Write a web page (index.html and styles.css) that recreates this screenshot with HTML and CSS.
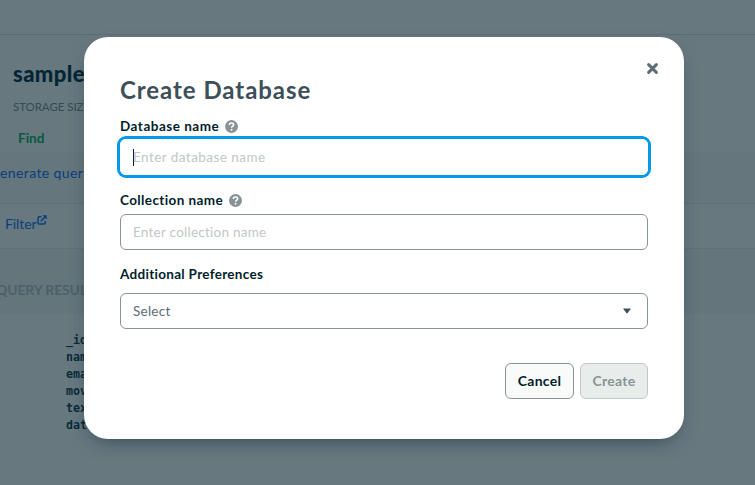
FILE: index.html
```html
<!DOCTYPE html>
<html lang="en">
<head>
<meta charset="utf-8">
<title>Create Database</title>
<link rel="stylesheet" href="styles.css">
</head>
<body>
<main class="page">
  <div class="topbar"></div>
  <section class="heading">
    <h1>sample</h1>
    <p class="storage">STORAGE SIZE</p>
    <p class="find">Find</p>
  </section>
  <section class="generate"><a>enerate query</a></section>
  <section class="filter"><a>Filter</a><svg class="external" viewBox="0 0 10 10"><path d="M4.3 1.7H2.2Q1 1.7 1 2.9V7.8Q1 9 2.2 9H7Q8.2 9 8.2 7.8V6M3.8 6.2 8 2" fill="none" stroke="currentColor" stroke-width="1.5"/><path d="M5.4.3H9.7V4.6Z" fill="currentColor"/></svg></section>
  <section class="results">QUERY RESULTS</section>
  <pre class="document">_id
name
email
movie
text
date</pre>
</main>
<div class="overlay">
  <div class="modal" role="dialog">
    <button class="close" aria-label="Close"><svg viewBox="0 0 10 10"><path d="M1.5 1.5 8.5 8.5M8.5 1.5 1.5 8.5" fill="none" stroke="currentColor" stroke-width="2.7" stroke-linecap="round"/></svg></button>
    <h2>Create Database</h2>
    <div class="label first"><span>Database name</span><svg class="help" viewBox="0 0 12 12"><circle cx="6" cy="6" r="6" fill="#889397"/><path d="M4 4.7C4 3.3 4.9 2.7 6 2.7S8 3.4 8 4.4C8 5.6 6.1 5.7 6.1 7.1" fill="none" stroke="#fff" stroke-width="1.4"/><circle cx="6.1" cy="9" r=".9" fill="#fff"/></svg></div>
    <div class="field focused"><span class="caret"></span><span class="hint">Enter database name</span></div>
    <div class="label second"><span>Collection name</span><svg class="help" viewBox="0 0 12 12"><circle cx="6" cy="6" r="6" fill="#889397"/><path d="M4 4.7C4 3.3 4.9 2.7 6 2.7S8 3.4 8 4.4C8 5.6 6.1 5.7 6.1 7.1" fill="none" stroke="#fff" stroke-width="1.4"/><circle cx="6.1" cy="9" r=".9" fill="#fff"/></svg></div>
    <div class="field collection"><span>Enter collection name</span></div>
    <div class="label third"><span>Additional Preferences</span></div>
    <div class="field select"><span>Select</span><svg class="arrow" viewBox="0 0 8 6"><path d="M.5.4H7.5Q8 .4 7.7.9L4.4 5.3Q4 5.8 3.6 5.3L.3.9Q0 .4.5.4Z" fill="#3d4f58"/></svg></div>
    <div class="actions"><button class="cancel">Cancel</button><button class="create" disabled>Create</button></div>
  </div>
</div>
</body>
</html>
```

FILE: styles.css
```css
* { box-sizing: border-box; }
body { margin: 0; width: 755px; height: 485px; overflow: hidden; position: relative; background: #68787f; font-family: Lato, "Liberation Sans", sans-serif; color: #001e2b; }
h1, h2, p, pre { margin: 0; }
button { font: inherit; padding: 0; }
.page { height: 485px; }
.topbar { height: 35px; border-bottom: 1px solid #5b6c74; }
.heading { height: 117px; padding: 26px 0 0 13px; color: #032634; }
h1 { font-size: 22px; line-height: 26px; font-weight: 900; letter-spacing: .4px; }
.storage { margin-top: 11px; font-size: 11.5px; line-height: 17px; letter-spacing: -.05px; color: #354a54; }
.find { margin: 14px 0 0 5px; font-size: 13.5px; line-height: 18px; font-weight: 700; color: #045a43; }
.generate { height: 52px; padding-top: 11px; font-size: 14px; line-height: 20px; letter-spacing: .4px; color: #073f80; background: #66767d; border-bottom: 1px solid #5e7078; }
.filter { height: 45px; padding: 10px 0 0 5px; display: flex; font-size: 14px; line-height: 20px; letter-spacing: -.1px; color: #073f80; border-bottom: 1px solid #5e7078; }
.external { width: 10px; height: 10px; margin: 1px 0 0 1px; }
.results { height: 65px; padding-top: 31px; text-indent: -4px; font-size: 14px; line-height: 20px; font-weight: 700; letter-spacing: -.15px; color: #4d6069; background: #64757c; }
.document { padding: 18px 0 0 66px; font: 700 11.6px/17px "DejaVu Sans Mono", monospace; color: #082b39; }
.overlay { position: absolute; inset: 0; padding: 37px 0 0 84px; }
.modal { position: relative; width: 600px; height: 402px; padding: 38px 36px 36px; border-radius: 24px; background: #fff; box-shadow: 0 8px 20px -8px rgba(0, 30, 43, .6); }
.close { position: absolute; right: 26px; top: 26px; width: 11px; height: 11px; padding: 0; border: 0; background: none; color: #5c6c75; }
.close svg, .help, .arrow { display: block; }
h2 { font-size: 24px; line-height: 30px; font-weight: 700; letter-spacing: .95px; color: #3d4f58; }
.label { display: flex; align-items: center; gap: 6px; height: 18px; margin-top: 12px; font-size: 13.5px; line-height: 18px; font-weight: 700; letter-spacing: .4px; white-space: nowrap; }
.first { letter-spacing: .5px; }
.help { width: 13px; height: 13px; }
.field { display: flex; align-items: center; height: 36px; margin-top: 4px; padding: 0 12px; border: 1px solid #889397; border-radius: 6px; font-size: 13.5px; letter-spacing: .25px; color: #c1c7c6; }
.focused { border-color: #fff; box-shadow: 0 0 0 3px #0498ec; }
.caret { width: 1px; height: 17px; margin-right: -1px; background: #001e2b; }
.hint { letter-spacing: .45px; }
.second { margin-top: 16px; }
.collection { margin-top: 4.5px; }
.third { margin-top: 15.5px; letter-spacing: .3px; }
.select { margin-top: 10px; justify-content: space-between; color: #5c6c75; }
.arrow { width: 8px; height: 6px; margin-right: 4px; }
.actions { display: flex; justify-content: flex-end; gap: 6px; margin-top: 34px; }
.actions button { height: 36px; padding-bottom: 2px; border-radius: 6px; font-size: 14px; font-weight: 700; letter-spacing: .3px; }
.actions .cancel { width: 69px; color: #001e2b; border: 1px solid #889397; background: #f9fbfa; }
.actions .create { width: 68px; color: #889397; border: 1px solid #c1c7c6; background: #e8edeb; }
```
